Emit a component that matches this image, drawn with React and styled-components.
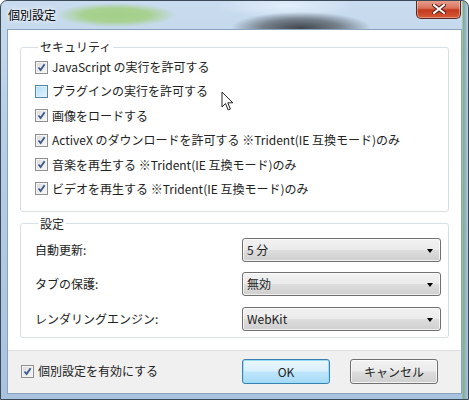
import React from "react";
import styled, { createGlobalStyle, css } from "styled-components";

const GlobalStyle = createGlobalStyle`
  html, body { margin: 0; padding: 0; background: #ffffff; }
  body {
    font-family: "Noto Sans CJK JP", "Noto Sans", sans-serif;
    font-size: 12px;
    color: #222222;
  }
`;

const security = [
  { label: "JavaScript の実行を許可する", checked: true },
  { label: "プラグインの実行を許可する", checked: false, hover: true },
  { label: "画像をロードする", checked: true },
  { label: "ActiveX のダウンロードを許可する ※Trident(IE 互換モード)のみ", checked: true },
  { label: "音楽を再生する ※Trident(IE 互換モード)のみ", checked: true },
  { label: "ビデオを再生する ※Trident(IE 互換モード)のみ", checked: true },
];

const settings = [
  { label: "自動更新:", value: "5 分" },
  { label: "タブの保護:", value: "無効" },
  { label: "レンダリングエンジン:", value: "WebKit" },
];

const Check = ({ checked, hover }) => (
  <CheckBox hover={hover ? 1 : 0}>
    {checked && (
      <svg width="9" height="9" viewBox="0 0 9 9">
        <path d="M1.5 4.5 L3.6 7 L7.6 1.2" fill="none" stroke="#3b5a8c" strokeWidth="1.8" />
      </svg>
    )}
  </CheckBox>
);

const Cursor = () => (
  <CursorWrap>
    <svg width="14" height="21" viewBox="0 0 14 21">
      <path d="M1 1 L1 16 L4.5 12.5 L7.2 19 L9.4 18 L6.8 11.8 L11.8 11.8 Z" fill="#ffffff" stroke="#222" strokeWidth="1" strokeLinejoin="round" />
    </svg>
  </CursorWrap>
);

const App = () => {
  return (
    <>
      <GlobalStyle />
      <Window>
        <TitleBar>
          <Title>個別設定</Title>
          <CloseButton>
            <svg width="14" height="10" viewBox="0 0 14 10">
              <path d="M2 1 L12 9 M12 1 L2 9" stroke="#5a1b12" strokeWidth="4" strokeLinecap="square" />
              <path d="M2 1 L12 9 M12 1 L2 9" stroke="#ffffff" strokeWidth="2" strokeLinecap="square" />
            </svg>
          </CloseButton>
        </TitleBar>
        <Client>
          <Body>
            <Group>
              <Legend>セキュリティ</Legend>
              <CheckList>
                {security.map((item) => (
                  <CheckRow key={item.label}>
                    <Check checked={item.checked} hover={item.hover} />
                    <span>{item.label}</span>
                  </CheckRow>
                ))}
              </CheckList>
              <Cursor />
            </Group>
            <Group second>
              <Legend>設定</Legend>
              <SettingGrid>
                {settings.map((s) => (
                  <React.Fragment key={s.label}>
                    <SettingLabel>{s.label}</SettingLabel>
                    <Select>
                      <span>{s.value}</span>
                      <Arrow />
                    </Select>
                  </React.Fragment>
                ))}
              </SettingGrid>
            </Group>
          </Body>
          <Footer>
            <FooterCheck>
              <Check checked />
              <span>個別設定を有効にする</span>
            </FooterCheck>
            <Buttons>
              <Button primary>OK</Button>
              <Button>キャンセル</Button>
            </Buttons>
          </Footer>
        </Client>
      </Window>
    </>
  );
};

const Window = styled.div`
  position: relative;
  width: 469px;
  height: 400px;
  box-sizing: border-box;
  border: 1px solid #3c4a58;
  border-radius: 7px 7px 0 0;
  overflow: hidden;
  display: flex;
  flex-direction: column;
  background:
    radial-gradient(60px 12px at 115px 14px, #a3cf8a 0%, #a8d190 55%, rgba(168, 209, 144, 0) 100%),
    radial-gradient(70px 16px at 300px 27px, rgba(50, 55, 60, 0.9) 0%, rgba(50, 55, 60, 0.55) 55%, rgba(50, 55, 60, 0) 100%),
    radial-gradient(70px 12px at 285px 5px, rgba(228, 240, 252, 0.95), rgba(228, 240, 252, 0) 100%),
    linear-gradient(90deg, rgba(0, 0, 0, 0) 461px, #7fae7c 462px, #9ab6cf 465px, rgba(0, 0, 0, 0) 467px),
    linear-gradient(180deg, #c9dcef 0%, #b8cfe6 30%, #a9c3df 100%);
`;

const TitleBar = styled.div`
  height: 28px;
  flex: none;
  display: flex;
  align-items: center;
  padding-left: 7px;
`;

const Title = styled.div`
  font-size: 12px;
  line-height: 14px;
  color: #000;
  text-shadow: 0 0 6px rgba(255, 255, 255, 0.95), 0 0 3px rgba(255, 255, 255, 0.9);
`;

const CloseButton = styled.div`
  position: absolute;
  top: -1px;
  right: 7px;
  width: 45px;
  height: 19px;
  box-sizing: border-box;
  border: 1px solid #5b2a22;
  border-top: none;
  border-radius: 0 0 5px 5px;
  display: flex;
  align-items: center;
  justify-content: center;
  background: linear-gradient(180deg, #e8a392 0%, #d9735c 45%, #c4391d 55%, #d65a36 100%);
  box-shadow: inset 0 0 0 1px rgba(255, 255, 255, 0.35);
`;

const Client = styled.div`
  flex: 1;
  margin: 0 6px 6px 6px;
  border: 1px solid #8aa2bd;
  background: #ffffff;
  display: flex;
  flex-direction: column;
`;

const Body = styled.div`
  flex: 1;
  padding: 9px 12px 12px 12px;
  display: flex;
  flex-direction: column;
  gap: 4px;
`;

const Group = styled.fieldset`
  position: relative;
  margin: 0;
  padding: 3px 14px 13px 14px;
  border: 1px solid #d5dfe5;
  border-radius: 3px;
  min-width: 0;
  ${({ second }) =>
    second &&
    css`
      padding: 3px 7px 6px 14px;
    `}
`;

const Legend = styled.legend`
  margin-left: 3px;
  padding: 0 2px;
  font-size: 12px;
  line-height: 16px;
`;

const CheckList = styled.div`
  display: flex;
  flex-direction: column;
  gap: 6.4px;
`;

const CheckRow = styled.div`
  display: flex;
  align-items: center;
  gap: 4px;
  height: 18px;
  line-height: 18px;
  white-space: nowrap;
`;

const CheckBox = styled.div`
  width: 13px;
  height: 13px;
  box-sizing: border-box;
  flex: none;
  border: 1px solid #8f8f8f;
  display: flex;
  align-items: center;
  justify-content: center;
  background: linear-gradient(135deg, #dcdcdc 0%, #f6f6f6 100%);
  box-shadow: inset 0 0 0 1px #f4f4f4;
  ${({ hover }) =>
    hover &&
    css`
      border-color: #5586a3;
      background: linear-gradient(135deg, #b1dff7 0%, #e3f4fc 100%);
      box-shadow: inset 0 0 0 1px #def1fb;
    `}
`;

const CursorWrap = styled.div`
  position: absolute;
  left: 200px;
  top: 36px;
  line-height: 0;
`;

const SettingGrid = styled.div`
  display: grid;
  grid-template-columns: 1fr 199px;
  row-gap: 10.5px;
  align-items: center;
  padding-top: 3px;
`;

const SettingLabel = styled.div`
  line-height: 16px;
`;

const Select = styled.div`
  height: 24px;
  box-sizing: border-box;
  border: 1px solid #707070;
  border-radius: 3px;
  padding: 0 7px 0 4px;
  display: flex;
  align-items: center;
  justify-content: space-between;
  background: linear-gradient(180deg, #f2f2f2 0%, #ebebeb 48%, #dddddd 52%, #cfcfcf 100%);
  box-shadow: inset 0 0 0 1px rgba(255, 255, 255, 0.7);
  line-height: 16px;
`;

const Arrow = styled.div`
  width: 0;
  height: 0;
  border-left: 3.5px solid transparent;
  border-right: 3.5px solid transparent;
  border-top: 4px solid #000;
  margin-top: 2px;
`;

const Footer = styled.div`
  height: 42px;
  flex: none;
  border-top: 1px solid #dfdfdf;
  background: #f0f0f0;
  display: flex;
  align-items: center;
  justify-content: space-between;
  padding: 0 23px 0 13px;
`;

const FooterCheck = styled.div`
  display: flex;
  align-items: center;
  gap: 4px;
  line-height: 16px;
  margin-top: -1px;
`;

const Buttons = styled.div`
  display: flex;
  gap: 20px;
`;

const Button = styled.div`
  width: 88px;
  height: 25px;
  box-sizing: border-box;
  border: 1px solid #707070;
  border-radius: 3px;
  display: flex;
  align-items: center;
  justify-content: center;
  line-height: 16px;
  background: linear-gradient(180deg, #f2f2f2 0%, #ebebeb 48%, #dddddd 52%, #cfcfcf 100%);
  box-shadow: inset 0 0 0 1px rgba(255, 255, 255, 0.75);
  ${({ primary }) =>
    primary &&
    css`
      border-color: #3c7fb1;
      background: linear-gradient(180deg, #eaf6fd 0%, #d9f0fc 48%, #bee6fd 52%, #a7d9f5 100%);
      box-shadow: inset 0 0 0 1px #98e0f8;
    `}
`;

export default App;
